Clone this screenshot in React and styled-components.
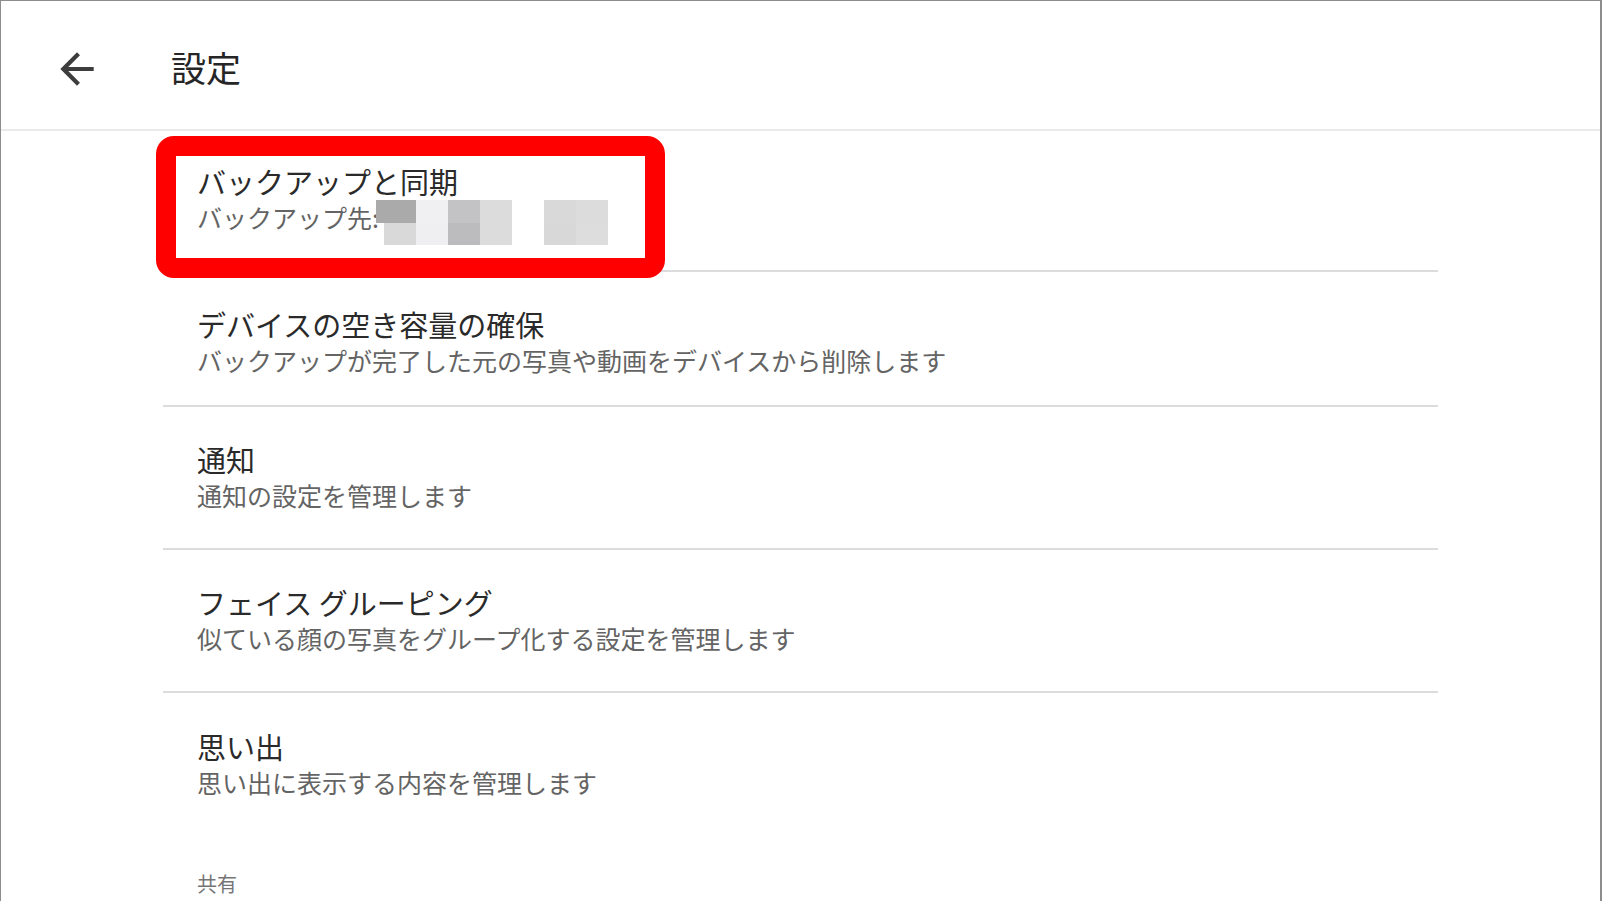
import styled, { createGlobalStyle } from "styled-components";

const GlobalStyle = createGlobalStyle`
  html, body {
    margin: 0;
    padding: 0;
    background: #ffffff;
    overflow: hidden;
  }
`;

const Page = styled.div`
  width: 1602px;
  height: 901px;
  box-sizing: border-box;
  border: 1px solid #8d8d8d;
  border-right-width: 2px;
  border-bottom: none;
  overflow: hidden;
  background: #ffffff;
  font-family: "Noto Sans CJK JP", "Noto Sans", sans-serif;
`;

const Header = styled.header`
  height: 130px;
  box-sizing: border-box;
  padding: 4px 0 0 51px;
  display: flex;
  align-items: center;
  border-bottom: 2px solid #ebebeb;
`;

const BackButton = styled.button`
  width: 50px;
  height: 50px;
  padding: 0;
  margin-top: 3px;
  border: none;
  background: none;
  display: flex;
  color: #3d3d3d;
  svg {
    width: 50px;
    height: 50px;
  }
`;

const PageTitle = styled.h1`
  margin: 0 0 0 69px;
  font-size: 35px;
  font-weight: 400;
  line-height: 44px;
  color: #262626;
`;

const List = styled.div`
  margin-left: 162px;
  width: 1275px;
`;

const Row = styled.div`
  position: relative;
  padding: ${(p) => p.$top}px 0 ${(p) => p.$bottom}px 34px;
  border-bottom: ${(p) => (p.$last ? "none" : "2px solid #dcdcdc")};
`;

const RowTitle = styled.div`
  font-size: 29px;
  line-height: 36px;
  color: #2a2a2a;
`;

const RowText = styled.div`
  font-size: 25px;
  line-height: 36px;
  color: #646464;
`;

const Highlight = styled.div`
  position: absolute;
  left: -7px;
  top: 5px;
  width: 509px;
  height: 142px;
  box-sizing: border-box;
  border: 20px solid #ff0000;
  border-radius: 18px;
  z-index: 1;
  pointer-events: none;
`;

const Mosaic = styled.svg`
  position: absolute;
  left: 213px;
  top: 69px;
  width: 232px;
  height: 45px;
`;

const SectionLabel = styled.div`
  padding: 35px 0 0 34px;
  font-size: 20px;
  line-height: 28px;
  color: #757575;
`;

const mosaicCells = [
  [0, 0, 40, 23, "#aaaaaa"],
  [40, 0, 32, 23, "#f0f0f2"],
  [72, 0, 32, 23, "#c3c3c5"],
  [104, 0, 32, 23, "#dcdcdc"],
  [168, 0, 32, 23, "#d9d9d9"],
  [200, 0, 32, 23, "#dcdcdc"],
  [8, 23, 32, 22, "#d9d9d9"],
  [40, 23, 32, 22, "#efeff1"],
  [72, 23, 32, 22, "#bcbcbe"],
  [104, 23, 32, 22, "#dcdcdc"],
  [168, 23, 32, 22, "#d8d8d8"],
  [200, 23, 32, 22, "#dddddd"],
];

const items = [
  {
    title: "デバイスの空き容量の確保",
    text: "バックアップが完了した元の写真や動画をデバイスから削除します",
    top: 34,
    bottom: 27,
  },
  { title: "通知", text: "通知の設定を管理します", top: 34, bottom: 35 },
  {
    title: "フェイス グルーピング",
    text: "似ている顔の写真をグループ化する設定を管理します",
    top: 34,
    bottom: 35,
  },
];

export default function App() {
  return (
    <Page>
      <GlobalStyle />
      <Header>
        <BackButton aria-label="戻る">
          <svg viewBox="0 0 24 24" fill="currentColor">
            <path d="M20 11H7.83l5.59-5.59L12 4l-8 8 8 8 1.41-1.41L7.83 13H20v-2z" />
          </svg>
        </BackButton>
        <PageTitle>設定</PageTitle>
      </Header>
      <List>
        <Row $top={32} $bottom={35}>
          <RowTitle>バックアップと同期</RowTitle>
          <RowText>バックアップ先:</RowText>
          <Mosaic viewBox="0 0 232 45">
            {mosaicCells.map(([x, y, w, h, c], i) => (
              <rect key={i} x={x} y={y} width={w} height={h} fill={c} />
            ))}
          </Mosaic>
          <Highlight />
        </Row>
        {items.map((item) => (
          <Row key={item.title} $top={item.top} $bottom={item.bottom}>
            <RowTitle>{item.title}</RowTitle>
            <RowText>{item.text}</RowText>
          </Row>
        ))}
        <Row $top={35} $bottom={35} $last>
          <RowTitle>思い出</RowTitle>
          <RowText>思い出に表示する内容を管理します</RowText>
        </Row>
        <SectionLabel>共有</SectionLabel>
      </List>
    </Page>
  );
}
